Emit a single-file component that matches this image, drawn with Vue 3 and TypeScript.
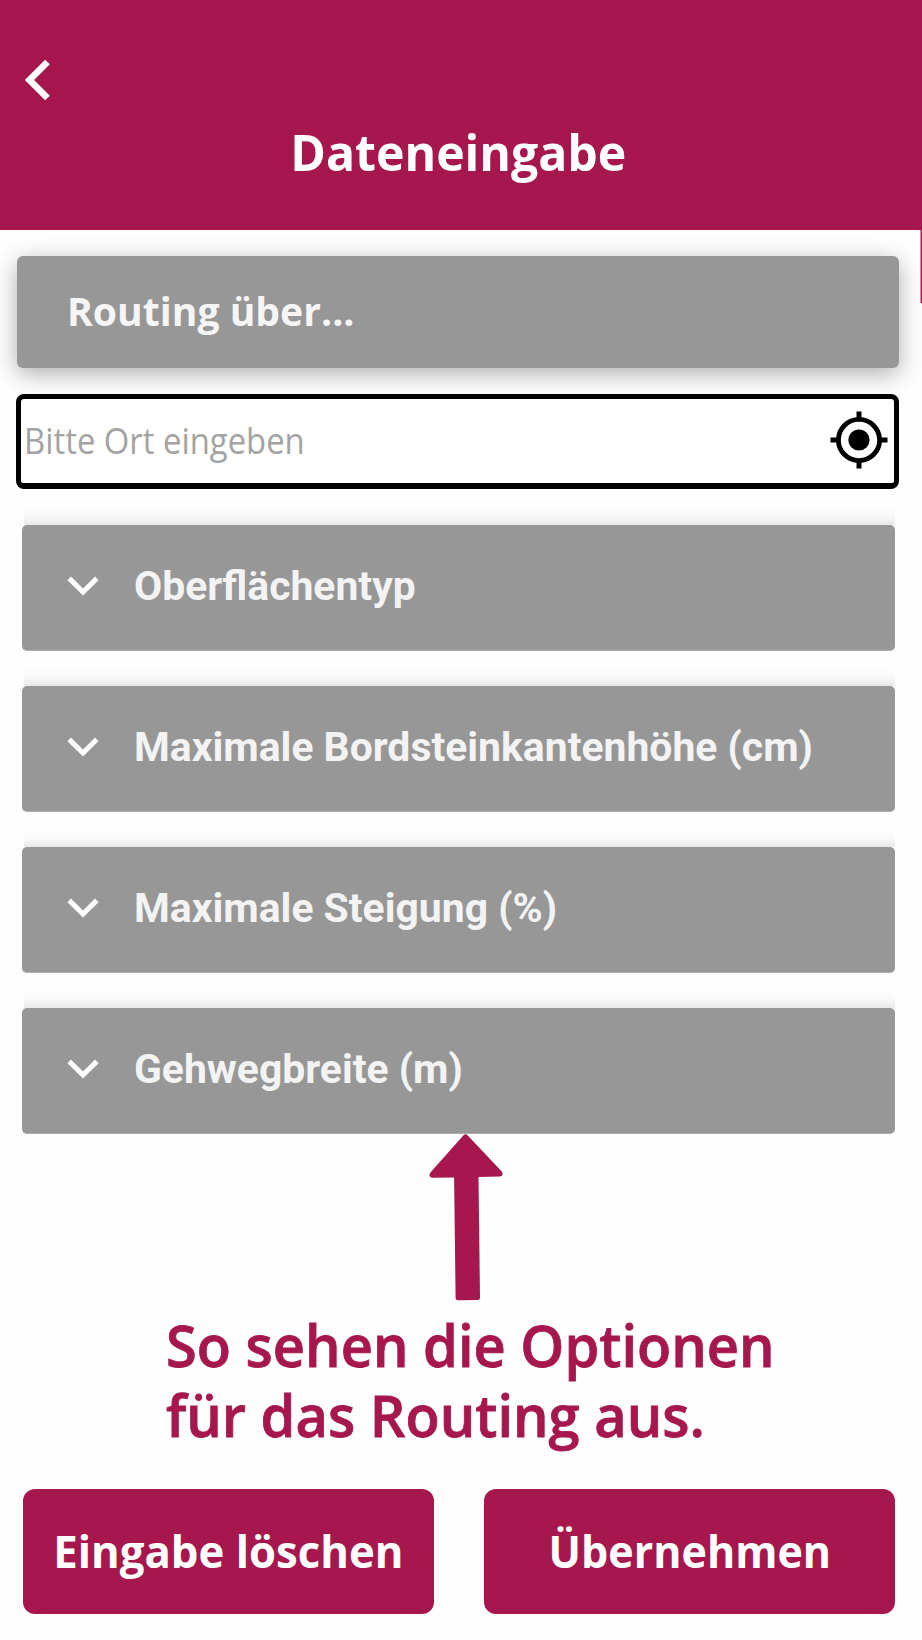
<script setup lang="ts">
const options: string[] = [
  'Oberflächentyp',
  'Maximale Bordsteinkantenhöhe (cm)',
  'Maximale Steigung (%)',
  'Gehwegbreite (m)',
]
</script>

<template>
  <div class="screen">
    <header class="header">
      <button class="back" type="button" aria-label="Zurück">
        <svg width="30" height="44" viewBox="0 0 30 44">
          <path d="M24.5 4 L6.5 22 L24.5 40" fill="none" stroke="#fff" stroke-width="6.6" />
        </svg>
      </button>
      <h1 class="title"><span>Dateneingabe</span></h1>
      <span class="edge"></span>
    </header>

    <main class="content">
      <section class="routing"><span>Routing über...</span></section>

      <div class="field">
        <span class="placeholder">Bitte Ort eingeben</span>
        <svg class="locate" width="58" height="58" viewBox="-29 -29 58 58">
          <circle r="20.6" fill="none" stroke="#000" stroke-width="4.8" />
          <circle r="10.6" />
          <path d="M0 -28.5V-20 M0 20V28.5 M-28.5 0H-20 M20 0H28.5" stroke="#000" stroke-width="5" />
        </svg>
      </div>

      <ul class="options">
        <li v-for="option in options" :key="option">
          <div class="shade"></div>
          <div class="option">
            <svg class="chevron" width="32" height="22" viewBox="0 0 32 22">
              <path d="M2.2 3.4 L16 17 L29.8 3.4" fill="none" stroke="#fff" stroke-width="5" />
            </svg>
            <span>{{ option }}</span>
          </div>
        </li>
      </ul>

      <svg class="arrow" width="74" height="168" viewBox="0 0 74 168">
        <path
          d="M34.5 1.2 Q36.5 -0.8 38.5 1.2 L72.8 37.5 Q75 42 71 42.5 L49.5 43 L51 163.5 Q51 166 48.5 166 L29 166.3 Q26.7 166.3 26.6 164 L25.1 43.5 L3 43.8 Q-1 43 1.2 38.8 Z"
          fill="#a6174e"
        />
      </svg>

      <p class="caption">
        <span class="line">So sehen die Optionen</span>
        <span class="line">für das Routing aus.</span>
      </p>
    </main>

    <footer class="actions">
      <button class="action clear" type="button"><span>Eingabe löschen</span></button>
      <button class="action apply" type="button"><span>Übernehmen</span></button>
    </footer>
  </div>
</template>

<style>
body {
  margin: 0;
  background: #fff;
}
</style>

<style scoped>
.screen {
  width: 922px;
  height: 1640px;
  overflow: hidden;
  box-sizing: border-box;
  display: flex;
  flex-direction: column;
  background: #fefefe;
  font-family: "Open Sans", "Noto Sans", sans-serif;
}
.header {
  position: relative;
  height: 230px;
  flex: none;
  background: #a6174e;
}
.back {
  display: flex;
  align-items: flex-start;
  padding: 58px 0 0 23px;
  border: 0;
  background: none;
  height: 117px;
  box-sizing: border-box;
}
.back svg {
  display: block;
}
.title {
  margin: 0;
  padding-right: 5px;
  line-height: 70px;
  font-size: 50px;
  font-weight: 700;
  text-align: center;
  color: #fff;
  white-space: nowrap;
}
.title span,
.routing span,
.action span {
  display: inline-block;
}
.title span {
  transform: scaleX(0.964);
}
.edge {
  position: absolute;
  right: 0;
  top: 230px;
  width: 2px;
  height: 73px;
  background: linear-gradient(90deg, #d88ba8 50%, #a6174e 50%);
}
.content {
  flex: none;
  display: flex;
  flex-direction: column;
}
.routing {
  margin: 26px 23px 0 17px;
  height: 112px;
  line-height: 110px;
  padding-left: 50px;
  border-radius: 6px;
  background: #979797;
  color: #f5f5f5;
  font-size: 40px;
  font-weight: 700;
  white-space: nowrap;
  box-shadow: 0 6px 24px rgba(0, 0, 0, 0.32);
}
.routing span {
  transform: scaleX(0.978);
  transform-origin: left;
}
.field {
  position: relative;
  margin: 26px 23px 0 16px;
  height: 95px;
  box-sizing: border-box;
  border: 5px solid #000;
  border-bottom-width: 6px;
  border-radius: 8px;
  background: #fff;
  display: flex;
  align-items: center;
  justify-content: space-between;
  padding: 0 6px 2px 3px;
}
.placeholder {
  font-size: 37px;
  line-height: 60px;
  color: #a3a3a3;
  white-space: nowrap;
  transform: scaleX(0.887);
  transform-origin: left;
}
.locate {
  flex: none;
}
.options {
  list-style: none;
  margin: 18px 27px 0 22px;
  padding: 0;
}
.options li {
  height: 161px;
}
.options li:last-child {
  height: 144px;
}
.shade {
  height: 18px;
  margin: 0 0 0 2px;
  background: linear-gradient(#fefefe, #f8f9f9 50%, #e8e8e8);
}
.option {
  height: 126px;
  box-sizing: border-box;
  display: flex;
  align-items: center;
  padding: 0 0 3px 45px;
  border-radius: 5px;
  border-bottom: 1px solid #adadad;
  background: #979797;
  color: #f3f3f3;
  font-family: Roboto, sans-serif;
  font-size: 41px;
  font-weight: 700;
  white-space: nowrap;
}
.option span {
  transform: scaleX(0.997);
  transform-origin: left;
}
.chevron {
  flex: none;
  margin-right: 35px;
}
.arrow {
  display: block;
  margin: 0 0 0 429px;
}
.caption {
  margin: 8px 0 0 166px;
  font-size: 57.5px;
  line-height: 70px;
  font-weight: 600;
  color: #a6174e;
  -webkit-text-stroke: 0.8px #a6174e;
}
.line {
  display: block;
  width: max-content;
  white-space: nowrap;
  transform: scaleX(0.974);
  transform-origin: left;
}
.actions {
  margin: auto 27px 26px 23px;
  flex: none;
  display: grid;
  grid-template-columns: 411px 411px;
  justify-content: space-between;
}
.action {
  height: 125px;
  padding: 0 0 3px;
  border: 0;
  border-radius: 12px;
  background: #a6174e;
  color: #fff;
  font-family: inherit;
  font-size: 45px;
  font-weight: 700;
  white-space: nowrap;
}
.clear span {
  transform: scaleX(0.971);
}
.apply span {
  transform: scaleX(0.956);
}
</style>
